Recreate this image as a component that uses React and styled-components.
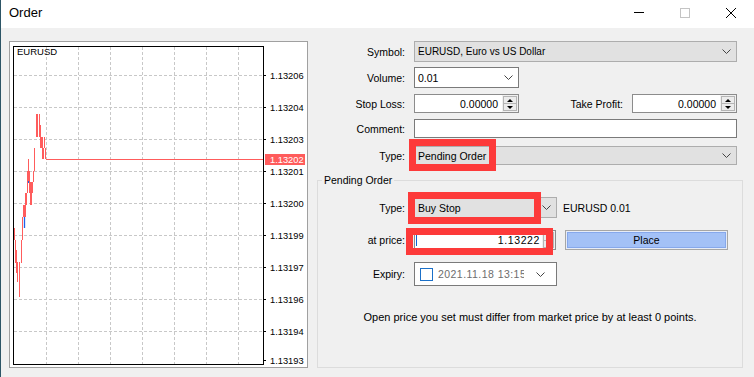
import React from 'react';
import styled, { createGlobalStyle } from 'styled-components';

const Global = createGlobalStyle`
  html, body { margin: 0; padding: 0; background: #f0f0f0; }
  body { font-family: "Liberation Sans", Arial, sans-serif; color: #000; }
  * { box-sizing: border-box; }
`;

const Window = styled.div`
  width: 754px;
  height: 377px;
  overflow: hidden;
  background: #f0f0f0;
  border-left: 1px solid #2d5566;
  display: flex;
  flex-direction: column;
`;

const TitleBar = styled.div`
  height: 28px;
  flex-shrink: 0;
  background: #fff;
  display: flex;
  align-items: center;
`;

const Title = styled.div`
  padding-left: 8px;
  font-size: 13px;
  line-height: 16px;
  padding-bottom: 2px;
`;

const WinButtons = styled.div`
  margin-left: auto;
  display: flex;
  height: 100%;
`;

const WinButton = styled.div`
  width: 46px;
  height: 100%;
  display: flex;
  justify-content: center;
  padding-top: 8px;
  svg { display: block; }
`;

const Body = styled.div`
  flex: 1;
  display: flex;
  padding-top: 13px;
`;

const ChartFrame = styled.div`
  margin-left: 8px;
  width: 299px;
  height: 327px;
  flex-shrink: 0;
  border: 1px solid #a0a0a0;
  background: #fff;
  svg { display: block; }
`;

const Form = styled.div`
  margin-left: 2px;
  flex: 1;
  display: flex;
  flex-direction: column;
`;

const Row = styled.div`
  display: flex;
  align-items: center;
  gap: 9px;
  height: ${p => p.$h}px;
  margin-top: ${p => p.$mt || 0}px;
  flex-shrink: 0;
`;

const Label = styled.div`
  width: ${p => p.$w}px;
  text-align: right;
  font-size: 10.5px;
  white-space: nowrap;
  flex-shrink: 0;
`;

const Combo = styled.div`
  position: relative;
  width: ${p => p.$w}px;
  height: 100%;
  background: ${p => (p.$white ? '#fff' : '#e1e1e1')};
  border: 1px solid ${p => (p.$white ? '#7a7a7a' : '#adadad')};
  display: flex;
  align-items: center;
  padding: 0 5px 0 3px;
  font-size: ${p => p.$fs || 10.5}px;
  flex-shrink: 0;
`;

const ComboText = styled.span`
  flex: 1;
  white-space: nowrap;
  overflow: hidden;
`;

const TextBox = styled.div`
  width: ${p => p.$w}px;
  height: 100%;
  background: #fff;
  border: 1px solid #7a7a7a;
  flex-shrink: 0;
`;

const SpinBox = styled.div`
  position: relative;
  width: ${p => p.$w}px;
  height: 100%;
  display: flex;
  border: 1px solid #8c8c8c;
  background: #f0f0f0;
  flex-shrink: 0;
`;

const SpinInput = styled.div`
  flex: 1;
  background: #fff;
  display: flex;
  align-items: center;
  justify-content: flex-end;
  padding-right: ${p => p.$pr}px;
  font-size: 10.5px;
  letter-spacing: ${p => p.$ls || 0}px;
`;

const Caret = styled.span`
  width: 1px;
  height: 12px;
  background: #0a64d8;
  margin-right: auto;
  margin-left: 1px;
`;

const Spinner = styled.div`
  width: ${p => p.$w}px;
  margin: 1px;
  border: 1px solid #b5b5b5;
  background: #ececec;
  display: flex;
  flex-direction: column;
`;

const SpinHalf = styled.div`
  flex: 1;
  display: flex;
  align-items: center;
  justify-content: center;
  border-top: ${p => (p.$lower ? '1px solid #b5b5b5' : 'none')};
  &::after {
    content: '';
    width: 0;
    height: 0;
    border-left: 3px solid transparent;
    border-right: 3px solid transparent;
    ${p => (p.$lower ? 'border-top: 3px solid #000;' : 'border-bottom: 3px solid #000;')}
  }
`;

const RedMark = styled.div`
  position: absolute;
  left: ${p => p.$l}px;
  top: ${p => p.$t}px;
  width: ${p => p.$w}px;
  height: ${p => p.$h}px;
  border: 7px solid #fd3a3a;
  pointer-events: none;
`;

const Group = styled.fieldset`
  margin: 9px 11px 0 7px;
  padding: 0;
  height: 194px;
  border: 1px solid #dcdcdc;
  display: flex;
  flex-direction: column;
`;

const Legend = styled.legend`
  margin-left: 4px;
  padding: 0 2px;
  font-size: 10.5px;
  line-height: 13px;
`;

const SideText = styled.span`
  margin-left: -3px;
  font-size: 10.5px;
  white-space: nowrap;
`;

const PlaceButton = styled.div`
  width: 163px;
  height: 100%;
  border: 1px solid #a6a6a6;
  background: #a3c1f7;
  box-shadow: inset 0 0 0 1px #e6ecf8, inset 0 0 0 2px #86a8ec;
  display: flex;
  align-items: center;
  justify-content: center;
  font-size: 10.5px;
`;

const DateBox = styled.div`
  width: 143px;
  height: 100%;
  background: #fff;
  border: 1px solid #7a7a7a;
  display: flex;
  align-items: center;
  padding: 0 11px 0 5px;
`;

const CheckBox = styled.span`
  width: 13px;
  height: 13px;
  border: 1px solid #1b70c8;
  background: #fff;
  flex-shrink: 0;
`;

const DateText = styled.span`
  margin-left: 5px;
  width: 86px;
  overflow: hidden;
  white-space: nowrap;
  color: #6d6d6d;
  font-size: 10.5px;
  letter-spacing: 0.45px;
`;

const Message = styled.div`
  margin-top: 25px;
  text-align: center;
  font-size: 11px;
  line-height: 13px;
`;

const Chevron = () => (
  <svg width="9" height="5" viewBox="0 0 9 5" style={{ flexShrink: 0 }}>
    <polyline points="0.5,0.5 4.5,4.5 8.5,0.5" fill="none" stroke="#444" strokeWidth="1" />
  </svg>
);

const gridX = [0, 1, 2, 3, 4, 5, 6].map(k => 36.5 + 32 * k);
const gridY = [0, 1, 2, 3, 4, 5, 6, 7, 8].map(k => 33.5 + 32 * k);
const prices = [
  ['1.13206', 33.5],
  ['1.13204', 65.5],
  ['1.13203', 97.5],
  ['1.13201', 129.5],
  ['1.13200', 161.5],
  ['1.13199', 193.5],
  ['1.13197', 225.5],
  ['1.13196', 257.5],
  ['1.13194', 289.5],
  ['1.13193', 318.5],
];
const bars = [
  [4.5, 186, 198], [5.5, 198, 221], [6.5, 208, 231], [7.5, 220, 240], [9.5, 220, 255],
  [11.5, 198, 221], [12.5, 175, 198], [13.5, 163, 175], [14.5, 163, 175], [15.5, 151, 175],
  [16.5, 151, 163], [17.5, 129, 151], [18.5, 117, 140], [19.5, 129, 151], [20.5, 140, 163],
  [21.5, 140, 163], [22.5, 140, 151], [23.5, 129, 140], [24.5, 106, 129], [26.5, 72, 95],
  [27.5, 72, 95], [29.5, 72, 95], [30.5, 83, 106], [31.5, 95, 106], [32.5, 95, 117],
  [33.5, 106, 117], [34.5, 95, 106], [35.5, 106, 117],
];

const Chart = () => (
  <svg width="297" height="325" viewBox="0 0 297 325">
    {gridX.map(x => (
      <line key={'x' + x} x1={x} y1={5} x2={x} y2={322} stroke="#c8c8c8" strokeDasharray="3 2" />
    ))}
    {gridY.map(y => (
      <line key={'y' + y} x1={4} y1={y} x2={253} y2={y} stroke="#c8c8c8" strokeDasharray="3 2" />
    ))}
    {bars.map(([x, a, b], i) => (
      <line key={'b' + i} x1={x} y1={a} x2={x} y2={b} stroke="#ff5c5c" strokeWidth="1" />
    ))}
    <line x1={14.5} y1={175} x2={14.5} y2={186} stroke="#1f62e8" strokeWidth="1.3" />
    <line x1={18.5} y1={139} x2={18.5} y2={141} stroke="#1f62e8" strokeWidth="1" />
    <line x1={36} y1={117.5} x2={253} y2={117.5} stroke="#ff5c5c" strokeWidth="1" />
    <rect x="3.5" y="4.5" width="250" height="318" fill="none" stroke="#000" strokeWidth="1" />
    <text x="7" y="13" fontFamily="Liberation Sans, Arial, sans-serif" fontSize="9.5" fill="#000">EURUSD</text>
    {prices.map(([p, y]) => (
      <g key={p}>
        <line x1={253} y1={y} x2={256} y2={y} stroke="#000" />
        <text x="260" y={y + 3.3} fontFamily="Liberation Sans, Arial, sans-serif" fontSize="9.3" fill="#000">{p}</text>
      </g>
    ))}
    <rect x="255" y="112" width="40" height="11" fill="#ff5c5c" />
    <text x="260" y="120.8" fontFamily="Liberation Sans, Arial, sans-serif" fontSize="9.3" fill="#fff">1.13202</text>
  </svg>
);

export default function App() {
  return (
    <>
      <Global />
      <Window>
        <TitleBar>
          <Title>Order</Title>
          <WinButtons>
            <WinButton>
              <svg width="10" height="10" viewBox="0 0 10 10">
                <line x1="0" y1="4.5" x2="10" y2="4.5" stroke="#000" />
              </svg>
            </WinButton>
            <WinButton>
              <svg width="10" height="10" viewBox="0 0 10 10">
                <rect x="0.5" y="0.5" width="9" height="9" fill="none" stroke="#c4c4c4" />
              </svg>
            </WinButton>
            <WinButton>
              <svg width="10" height="10" viewBox="0 0 10 10">
                <line x1="0" y1="0" x2="10" y2="10" stroke="#000" />
                <line x1="10" y1="0" x2="0" y2="10" stroke="#000" />
              </svg>
            </WinButton>
          </WinButtons>
        </TitleBar>
        <Body>
          <ChartFrame>
            <Chart />
          </ChartFrame>
          <Form>
            <Row $h={21}>
              <Label $w={95}>Symbol:</Label>
              <Combo $w={323} $fs={10}>
                <ComboText>EURUSD, Euro vs US Dollar</ComboText>
                <Chevron />
              </Combo>
            </Row>
            <Row $h={21} $mt={5}>
              <Label $w={95}>Volume:</Label>
              <Combo $w={105} $white>
                <ComboText>0.01</ComboText>
                <Chevron />
              </Combo>
            </Row>
            <Row $h={19} $mt={6}>
              <Label $w={95}>Stop Loss:</Label>
              <SpinBox $w={105}>
                <SpinInput $pr={4}>0.00000</SpinInput>
                <Spinner $w={14}>
                  <SpinHalf />
                  <SpinHalf $lower />
                </Spinner>
              </SpinBox>
              <Label $w={95}>Take Profit:</Label>
              <SpinBox $w={105}>
                <SpinInput $pr={4}>0.00000</SpinInput>
                <Spinner $w={14}>
                  <SpinHalf />
                  <SpinHalf $lower />
                </Spinner>
              </SpinBox>
            </Row>
            <Row $h={19} $mt={6}>
              <Label $w={95}>Comment:</Label>
              <TextBox $w={323} />
            </Row>
            <Row $h={19} $mt={8}>
              <Label $w={95}>Type:</Label>
              <Combo $w={323}>
                <ComboText>Pending Order</ComboText>
                <Chevron />
                <RedMark $l={-6} $t={-8} $w={87} $h={32} />
              </Combo>
            </Row>
            <Group>
              <Legend>Pending Order</Legend>
              <Row $h={21} $mt={10}>
                <Label $w={87}>Type:</Label>
                <Combo $w={143}>
                  <ComboText>Buy Stop</ComboText>
                  <Chevron />
                  <RedMark $l={-7} $t={-6} $w={133} $h={32} />
                </Combo>
                <SideText>EURUSD 0.01</SideText>
              </Row>
              <Row $h={20} $mt={12}>
                <Label $w={87}>at price:</Label>
                <SpinBox $w={142}>
                  <SpinInput $pr={2} $ls={0.6}>
                    <Caret />
                    1.13222
                  </SpinInput>
                  <Spinner $w={11}>
                    <SpinHalf />
                    <SpinHalf $lower />
                  </Spinner>
                  <RedMark $l={-9} $t={-3} $w={147} $h={27} />
                </SpinBox>
                <PlaceButton>Place</PlaceButton>
              </Row>
              <Row $h={24} $mt={12}>
                <Label $w={87}>Expiry:</Label>
                <DateBox>
                  <CheckBox />
                  <DateText>2021.11.18 13:15</DateText>
                  <span style={{ marginLeft: 'auto', display: 'flex' }}>
                    <Chevron />
                  </span>
                </DateBox>
              </Row>
              <Message>Open price you set must differ from market price by at least 0 points.</Message>
            </Group>
          </Form>
        </Body>
      </Window>
    </>
  );
}
